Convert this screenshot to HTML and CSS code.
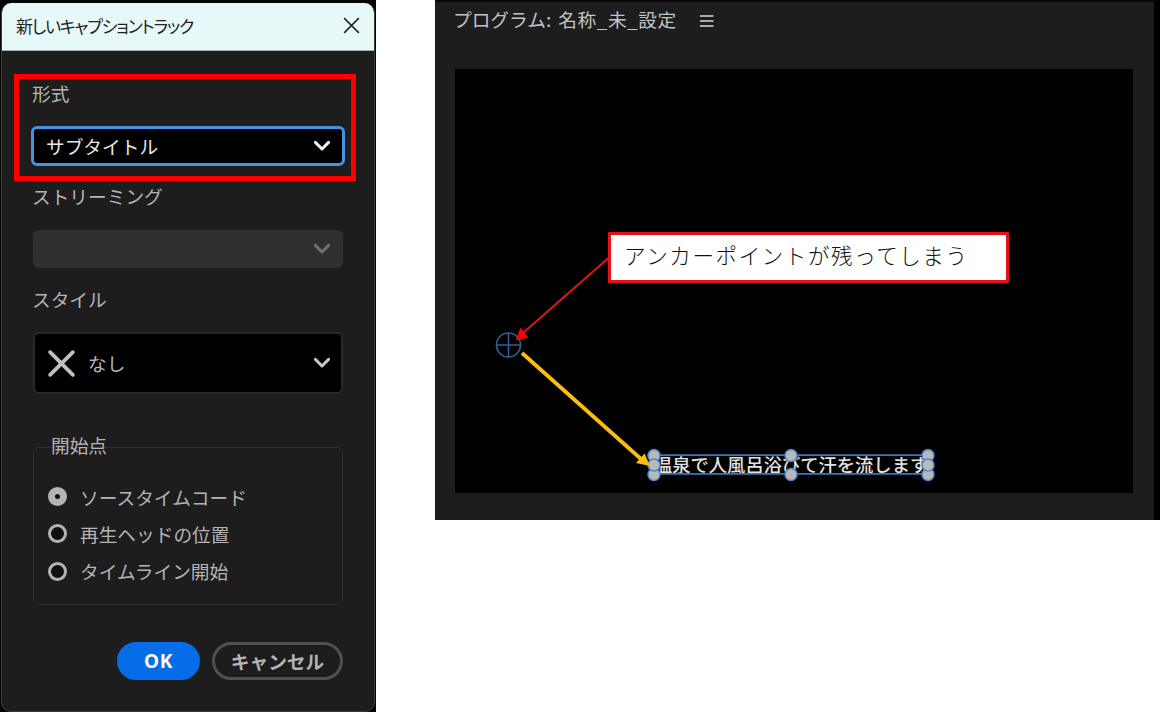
FILE: index.html
```html
<!DOCTYPE html>
<html lang="ja">
<head>
<meta charset="utf-8">
<title>新しいキャプショントラック</title>
<link rel="stylesheet" href="styles.css">
</head>
<body>
<main class="page">
  <div class="dialog-backdrop">
    <section class="dialog">
      <header class="dialog-header">
        <h1 class="dialog-title">新しいキャプショントラック</h1>
        <svg class="close" viewBox="0 0 18 18"><path d="M1.2 1.2 16.8 16.8M16.8 1.2 1.2 16.8"/></svg>
      </header>
      <div class="dialog-body">
        <div class="field highlight">
          <span class="label">形式</span>
          <div class="select focused"><span>サブタイトル</span><svg class="chevron" viewBox="0 0 18 12"><path d="M2.4 2.4 9 9 15.6 2.4"/></svg></div>
        </div>
        <div class="field">
          <span class="label">ストリーミング</span>
          <div class="select disabled"><svg class="chevron" viewBox="0 0 18 12"><path d="M2.4 2.4 9 9 15.6 2.4"/></svg></div>
        </div>
        <div class="field">
          <span class="label">スタイル</span>
          <div class="select style"><svg class="none-icon" viewBox="0 0 28 28"><path d="M2.2 2.2 25.8 25.8M25.8 2.2 2.2 25.8"/></svg><span>なし</span><svg class="chevron" viewBox="0 0 18 12"><path d="M2.4 2.4 9 9 15.6 2.4"/></svg></div>
        </div>
        <div class="group">
          <span class="group-title">開始点</span>
          <div class="option"><i class="radio checked"></i>ソースタイムコード</div>
          <div class="option"><i class="radio"></i>再生ヘッドの位置</div>
          <div class="option"><i class="radio"></i>タイムライン開始</div>
        </div>
        <div class="actions">
          <div class="button primary">OK</div>
          <div class="button">キャンセル</div>
        </div>
      </div>
    </section>
  </div>
  <section class="program">
    <header class="program-header">
      <span class="program-title">プログラム: <span class="sequence">名称_未_設定</span></span>
      <svg class="menu" viewBox="0 0 14 12"><path d="M0 1H13.5M0 6H13.5M0 11H13.5"/></svg>
    </header>
    <div class="monitor">
      <span class="caption">温泉で人風呂浴びて汗を流します</span>
      <svg class="overlay" viewBox="0 0 678 424">
        <g class="anchor"><circle cx="53.5" cy="276" r="12"/><path d="M41.5 276H65.5M53.5 264V288"/></g>
        <path class="bounds" d="M198.5 386.2H473M198.5 404.8H473"/>
        <g class="handles">
          <circle cx="199" cy="386.5" r="6"/><circle cx="199" cy="405.5" r="6"/><circle cx="199" cy="396" r="6"/>
          <circle cx="336" cy="386.5" r="6"/><circle cx="336" cy="405.5" r="6"/>
          <circle cx="473" cy="386.5" r="6"/><circle cx="473" cy="405.5" r="6"/><circle cx="473" cy="396" r="6"/>
        </g>
        <path class="red-line" d="M154 188.5 68 264"/>
        <path class="red-head" d="M60.5 271.5 65.5 258.5 73.5 268.5Z"/>
        <path class="yellow-line" d="M67 284 186 390"/>
        <path class="yellow-head" d="M195 397 181 394 189.500 384.500Z"/>
      </svg>
      <div class="callout">アンカーポイントが残ってしまう</div>
    </div>
  </section>
</main>
</body>
</html>
```
FILE: styles.css
```css
* { box-sizing: border-box; }
body { margin: 0; background: #fff; font-family: "Noto Sans CJK JP", sans-serif; font-size: 18.7px; line-height: 28px; color: #b4b4b4; }
svg { display: block; fill: none; overflow: visible; }
.page { display: flex; gap: 59px; width: 1160px; height: 712px; overflow: hidden; align-items: flex-start; }
.dialog-backdrop { width: 376px; height: 712px; padding: 3px 1px 0; background: #050505; flex: none; }
.dialog { height: 709px; border: 1px solid #3c3c3c; border-top: 0; border-radius: 10px; background: #1d1d1d; overflow: hidden; }
.dialog-header { height: 48px; border-bottom: 1px solid #a5b0ae; background: #e6f8f8; display: flex; align-items: center; justify-content: space-between; padding: 0 14px 2px 14px; }
.dialog-title { margin: 0; font-size: 17px; font-weight: 400; color: #222; white-space: nowrap; font-feature-settings: "palt"; letter-spacing: -1.2px; }
.close { width: 17px; height: 17px; stroke: #222; stroke-width: 1.6; }
.dialog-body { padding: 23px 18px 0 12px; display: flex; flex-direction: column; }
.field { padding: 0 1px 0 18px; display: flex; flex-direction: column; }
.field:nth-child(2) { padding-top: 1px; }
.field:nth-child(3) { padding-top: 17px; }
.highlight { height: 107px; border: 5px solid #fe0000; padding: 0 6px 0 11px; }
.label { height: 28px; margin-bottom: 20px; white-space: nowrap; }
.highlight .label { padding-left: 2px; margin-bottom: 19px; }
.field:nth-child(3) .label { margin-bottom: 19px; }
.select { height: 38px; border-radius: 6px; background: #000; display: flex; align-items: center; padding: 0 12px 0 13px; margin-left: 1px; margin-right: 12px; color: #b8b8b8; }
.select.focused { height: 40px; border: 3px solid #4593e5; color: #e8e8e8; margin: 0 0 0 1px; padding: 0 11px 1px 12px; }
.select.disabled { background: #303030; }
.select.style { height: 62px; border: 2px solid #292929; padding: 0 10px 0 13px; }
.none-icon { width: 27px; height: 27px; stroke: #c0c0c0; stroke-width: 3.9; stroke-linecap: round; margin-right: 13px; }
.chevron { width: 18px; height: 12px; margin-left: auto; stroke: #c8c8c8; stroke-width: 2.9; stroke-linecap: round; stroke-linejoin: round; }
.focused .chevron { stroke: #f2f2f2; }
.disabled .chevron { stroke: #707070; }
.group { position: relative; height: 158px; margin: 53px 13px 0 19px; border: 1px solid #303030; border-radius: 6px; padding: 30px 0 0 14px; display: flex; flex-direction: column; }
.group-title { position: absolute; left: 14px; top: -17px; padding: 0 3px; }
.option { height: 37.300px; display: flex; align-items: center; gap: 13px; white-space: nowrap; }
.radio { width: 19px; height: 19px; border: 3.500px solid #b4b4b4; border-radius: 50%; background: #101010; flex: none; }
.radio.checked { border-width: 7px; }
.actions { display: flex; justify-content: flex-end; gap: 12px; margin: 37px 13px 0 0; }
.button { width: 131px; height: 38px; border: 3px solid #505050; border-radius: 19px; display: flex; align-items: center; justify-content: center; font-weight: 700; white-space: nowrap; }
.button.primary { width: 83px; background: #066ce7; border-color: #066ce7; color: #fff; font-family: "Noto Sans", sans-serif; font-size: 19px; letter-spacing: .6px; }
.program { width: 725px; height: 520px; background: #1d1d1d; border-top: 2px solid #080808; border-right: 6px solid #000; padding: 0 20px; flex: none; }
.program-header { height: 67px; display: flex; align-items: flex-start; gap: 21px; padding-top: 3px; color: #c4c4c4; white-space: nowrap; }
.program-title { width: 225px; margin-left: -2px; }
.sequence { margin-left: 3px; letter-spacing: .6px; }
.menu { width: 14px; height: 12px; stroke: #aaa; stroke-width: 1.8; margin: 10px 0 0 1px; }
.monitor { position: relative; width: 678px; height: 424px; background: #000; }
.caption { position: absolute; left: 199px; top: 381px; font-size: 18.3px; font-weight: 500; color: #e2e2e2; white-space: nowrap; }
.overlay { position: absolute; left: 0; top: 0; width: 678px; height: 424px; }
.anchor { stroke: #2e6297; stroke-width: 1.600; }
.bounds { stroke: #3b76bb; stroke-width: 1.800; }
.handles { fill: #b9b9b9; stroke: #4c88cb; stroke-width: 1.500; }
.red-line { stroke: #df1519; stroke-width: 2; }
.red-head { fill: #fe0000; }
.yellow-line { stroke: #fdbb16; stroke-width: 3.800; }
.yellow-head { fill: #fdbb16; }
.callout { position: absolute; left: 153px; top: 163px; width: 401px; height: 51px; border: 3px solid #e31218; border-radius: 1px; background: #fff; padding: 4px 0 0 13px; color: #111; font-size: 21.5px; font-weight: 300; letter-spacing: 1.6px; line-height: 32px; white-space: nowrap; }
```
